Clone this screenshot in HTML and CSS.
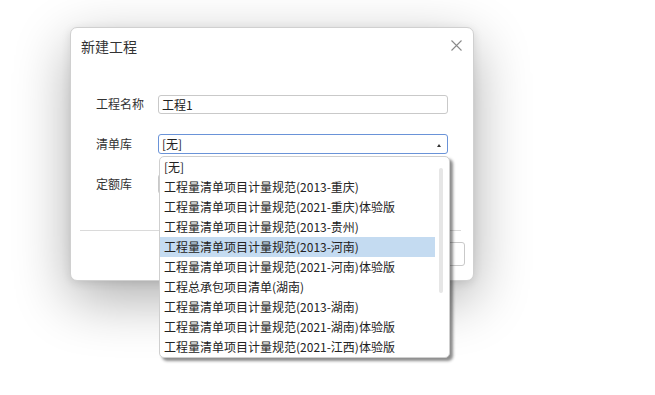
FILE: index.html
```html
<!DOCTYPE html>
<html lang="zh-CN">
<head>
<meta charset="utf-8">
<title>新建工程</title>
<link rel="stylesheet" href="styles.css">
</head>
<body>
<div class="dialog">
  <div class="header">
    <span class="title">新建工程</span>
    <svg class="close" width="11" height="11" viewBox="0 0 11 11"><path d="M0.5 0.5 L10.5 10.5 M10.5 0.5 L0.5 10.5" stroke="#8a8a8a" stroke-width="1.1" fill="none"/></svg>
  </div>
  <div class="form">
    <div class="row">
      <label class="label">工程名称</label>
      <div class="field input">工程1</div>
    </div>
    <div class="row">
      <label class="label">清单库</label>
      <div class="select-wrap">
        <div class="field select focused">[无]<span class="arrow"></span></div>
        <ul class="dropdown">
          <li>[无]</li>
          <li>工程量清单项目计量规范(2013-重庆)</li>
          <li>工程量清单项目计量规范(2021-重庆)体验版</li>
          <li>工程量清单项目计量规范(2013-贵州)</li>
          <li class="active">工程量清单项目计量规范(2013-河南)</li>
          <li>工程量清单项目计量规范(2021-河南)体验版</li>
          <li>工程总承包项目清单(湖南)</li>
          <li>工程量清单项目计量规范(2013-湖南)</li>
          <li>工程量清单项目计量规范(2021-湖南)体验版</li>
          <li>工程量清单项目计量规范(2021-江西)体验版</li>
          <span class="scroll-thumb"></span>
        </ul>
      </div>
    </div>
    <div class="row">
      <label class="label">定额库</label>
      <div class="field select"></div>
    </div>
  </div>
  <div class="footer">
    <button class="btn" aria-label="确定"></button>
    <button class="btn" aria-label="取消"></button>
  </div>
</div>
</body>
</html>
```

FILE: styles.css
```css
html, body {
  margin: 0;
  padding: 0;
  background: #ffffff;
}
body {
  font-family: "Noto Sans CJK SC", "Noto Sans", sans-serif;
  color: #333;
  padding-top: 27px;
  padding-left: 70px;
  height: 395px;
  box-sizing: border-box;
  overflow: hidden;
}
.dialog {
  width: 404px;
  height: 254px;
  box-sizing: border-box;
  background: #fff;
  border: 1px solid #d0d0d0;
  border-radius: 7px;
  box-shadow: 0 18px 56px rgba(0,0,0,0.32), 0 2px 10px rgba(0,0,0,0.10);
}
.header {
  display: flex;
  justify-content: space-between;
  align-items: center;
  padding: 8px 11px 0 10px;
  height: 20px;
}
.title {
  font-size: 14px;
  line-height: 20px;
  color: #333;
}
.close {
  display: block;
  margin-top: -1px;
}
.form {
  margin-top: 38px;
  padding-left: 25px;
  display: flex;
  flex-direction: column;
  gap: 20px;
}
.row {
  display: flex;
  align-items: center;
  height: 20px;
}
.label {
  width: 62px;
  font-size: 12px;
  line-height: 20px;
  color: #333;
}
.field {
  width: 290px;
  height: 20px;
  box-sizing: border-box;
  border: 1px solid #c9c9c9;
  border-radius: 3px;
  font-size: 12px;
  line-height: 18px;
  padding-left: 3px;
  color: #222;
  position: relative;
}
.input {
  height: 19px;
  line-height: 17px;
}
.select-wrap {
  position: relative;
}
.select.focused {
  border-color: #6a93d8;
}
.arrow {
  position: absolute;
  right: 6px;
  top: 9px;
  width: 0;
  height: 0;
  border-left: 2.5px solid transparent;
  border-right: 2.5px solid transparent;
  border-bottom: 3px solid #333;
}
.dropdown {
  position: absolute;
  left: 1px;
  top: 22px;
  width: 289px;
  margin: 0;
  padding: 0;
  list-style: none;
  background: #fff;
  border: 1px solid #cfcfcf;
  border-radius: 5px;
  box-shadow: 3px 3px 3px rgba(0,0,0,0.45);
  z-index: 10;
  overflow: hidden;
}
.dropdown li {
  width: 275px;
  height: 20px;
  font-size: 12px;
  line-height: 20px;
  padding-left: 4px;
  box-sizing: border-box;
  color: #222;
  white-space: nowrap;
}
.dropdown li.active {
  background: #c4dbf1;
}
.scroll-thumb {
  position: absolute;
  left: 279px;
  top: 11px;
  width: 4px;
  height: 125px;
  border-radius: 2px;
  background: #e6e6e6;
}
.footer {
  margin: 36px 12px 0 9px;
  border-top: 1px solid #dadada;
  padding-top: 11px;
  display: flex;
  justify-content: flex-end;
  gap: 10px;
}
.btn {
  width: 70px;
  height: 24px;
  margin-right: -4px;
  box-sizing: border-box;
  background: #fff;
  border: 1px solid #c9c9c9;
  border-radius: 3px;
  font-family: inherit;
  font-size: 12px;
  color: #333;
}
```
